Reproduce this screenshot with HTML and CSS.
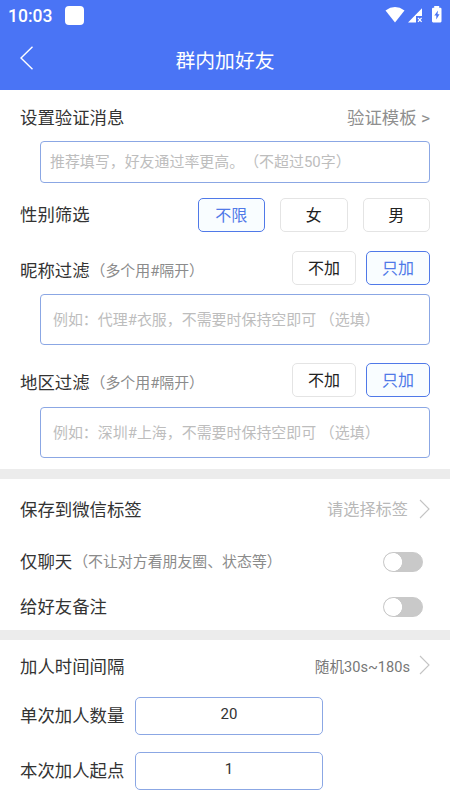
FILE: index.html
```html
<!DOCTYPE html>
<html lang="zh-CN">
<head>
<meta charset="utf-8">
<title>群内加好友</title>
<link rel="stylesheet" href="styles.css">
</head>
<body>
<header class="header">
  <div class="status">
    <span class="clock">10:03</span>
    <span class="app-dot"></span>
    <svg class="status-icons" width="58" height="18" viewBox="0 0 58 18" fill="#fff">
      <path d="M0.5 4.4Q10 -2.2 19.5 4.4L10 16.5Z"/>
      <path d="M37 2.200V10H31V16.400H23Z"/>
      <path d="M33 11.800l3.600 4M36.600 11.800l-3.600 4" stroke="#fff" stroke-width="1.2"/>
      <path fill-rule="evenodd" d="M49.2 0h5v1.800h1.200q1.100 0 1.100 1.100v12.400q0 1.100-1.100 1.100h-7.300q-1.100 0-1.100-1.100V2.900q0-1.100 1.100-1.100h1.100ZM53 4.600l-3.700 5h2v3.800l3.200-5.200h-2Z"/>
    </svg>
  </div>
  <div class="titlebar">
    <svg class="back" width="14" height="24" viewBox="0 0 14 24" fill="none" stroke="#fff" stroke-width="1.4"><path d="M12.500 .8L1 12l11.500 11.200"/></svg>
    <h1 class="title">群内加好友</h1>
  </div>
</header>

<main>
  <section class="section filters">
    <div class="row row-message"><span class="label">设置验证消息</span><span class="template">验证模板 &gt;</span></div>
    <div class="field field-message">推荐填写，好友通过率更高。（不超过50字）</div>
    <div class="row row-gender">
      <span class="label">性别筛选</span>
      <div class="choices wide"><span class="choice active">不限</span><span class="choice">女</span><span class="choice">男</span></div>
    </div>
    <div class="row row-filter">
      <span class="label">昵称过滤<small class="hint">（多个用#隔开）</small></span>
      <div class="choices"><span class="choice">不加</span><span class="choice active">只加</span></div>
    </div>
    <div class="field">例如：代理#衣服，不需要时保持空即可 （选填）</div>
    <div class="row row-filter second">
      <span class="label">地区过滤<small class="hint">（多个用#隔开）</small></span>
      <div class="choices"><span class="choice">不加</span><span class="choice active">只加</span></div>
    </div>
    <div class="field">例如：深圳#上海，不需要时保持空即可 （选填）</div>
  </section>

  <section class="section options">
    <div class="row row-tag">
      <span class="label">保存到微信标签</span>
      <span class="value pale"><span>请选择标签</span><svg class="arrow" width="11" height="20" viewBox="0 0 11 20"><path d="M1 1l9 9-9 9"/></svg></span>
    </div>
    <div class="row row-switch"><span class="label">仅聊天<small class="hint">（不让对方看朋友圈、状态等）</small></span><span class="switch"></span></div>
    <div class="row row-switch"><span class="label">给好友备注</span><span class="switch"></span></div>
  </section>

  <section class="section timing">
    <div class="row row-interval">
      <span class="label">加人时间间隔</span>
      <span class="value"><span>随机30s~180s</span><svg class="arrow" width="11" height="20" viewBox="0 0 11 20"><path d="M1 1l9 9-9 9"/></svg></span>
    </div>
    <div class="row row-number"><span class="label">单次加人数量</span><span class="number">20</span></div>
    <div class="row row-number"><span class="label">本次加人起点</span><span class="number">1</span></div>
  </section>
</main>
</body>
</html>
```

FILE: styles.css
```css
* { box-sizing: border-box; }

body {
  margin: 0;
  height: 800px;
  overflow: hidden;
  background: #fff;
  color: #333;
  font-family: Roboto, "Noto Sans CJK SC", sans-serif;
  font-size: 17.4px;
  line-height: 24px;
  white-space: nowrap;
  text-spacing-trim: space-all;
}

svg { display: block; flex: none; }

.header {
  height: 90px;
  background: #4a74f5;
  color: #fff;
}

.status {
  display: flex;
  align-items: center;
  height: 30px;
  padding: 0 8px;
}

.clock {
  width: 57px;
  font-size: 17.5px;
  font-weight: 500;
  padding-top: 2px;
}

.app-dot {
  width: 19px;
  height: 19px;
  border-radius: 4px;
  background: #fff;
}

.status-icons { margin-left: auto; margin-right: -1px; }

.titlebar {
  display: grid;
  grid-template-columns: 14px 1fr 14px;
  align-items: center;
  height: 60px;
  padding: 0 20px;
}

.back { margin-bottom: 4px; }

.title {
  margin: 0;
  padding-top: 4px;
  text-align: center;
  font-size: 19.8px;
  font-weight: 400;
}

.section { padding: 0 20px; }

.filters { height: 379px; }

.options {
  height: 171px;
  border: solid #ececec;
  border-width: 10px 0;
}

.row {
  display: flex;
  align-items: center;
  justify-content: space-between;
}

.label { display: flex; align-items: center; }

.hint {
  margin-left: 1px;
  color: #8b8b8b;
  font-size: 14.900px;
}

.template { color: #8f8f8f; }

.row-message { height: 51px; padding-top: 4px; }

.field {
  display: flex;
  align-items: center;
  height: 51px;
  margin-left: 20px;
  padding-left: 12px;
  border: 1px solid #8ba7e4;
  border-radius: 4px;
  color: #bdbdbd;
  font-size: 14.950px;
}

.field-message { height: 42px; padding-left: 9px; }

.row-gender { height: 63px; }
.row-filter { height: 48px; }
.row-filter .label { padding-top: 1px; }
.row-filter .choices { margin-bottom: 5px; }
.row-filter.second { height: 62px; padding-top: 12px; }
.row-filter.second .choices { margin-bottom: 4px; }

.choices { display: flex; gap: 10px; }
.choices.wide { gap: 15px; }

.choice {
  width: 64px;
  height: 34px;
  border: 1px solid #e4e4e4;
  border-radius: 5px;
  color: #222;
  font-size: 16px;
  line-height: 34px;
  text-align: center;
}

.wide .choice { width: 67.500px; }

.choice.active {
  border-color: #5079e8;
  background: #f9fdff;
  color: #5079e8;
}

.value {
  display: flex;
  align-items: center;
  gap: 9px;
  color: #777;
  font-size: 14.600px;
}

.value.pale { color: #b8b8b8; font-size: 16.200px; gap: 11px; }
.value.pale span { padding-top: 2px; }

.arrow {
  fill: none;
  stroke: #c4c4c4;
  stroke-width: 1.1;
}

.row-tag { height: 60px; }
.row-tag .label { padding-top: 2px; }
.row-switch { height: 45px; }

.switch {
  width: 40px;
  height: 20px;
  margin-right: 7.500px;
  border: 1px solid #c9c9c9;
  border-radius: 10px;
  background: radial-gradient(circle at 9px 9px, #fff 8.700px, #c9c9c9 9.300px);
}

.row-interval { height: 53px; }
.row-interval .arrow { margin-bottom: 3px; }

.row-number {
  justify-content: flex-start;
  gap: 10.600px;
  height: 38px;
  margin-bottom: 17px;
}

.row-interval + .row-number { margin-top: 4px; }

.number {
  width: 188px;
  height: 38px;
  border: 1px solid #8ba7e4;
  border-radius: 5px;
  font-size: 15px;
  line-height: 32px;
  text-align: center;
}
```
